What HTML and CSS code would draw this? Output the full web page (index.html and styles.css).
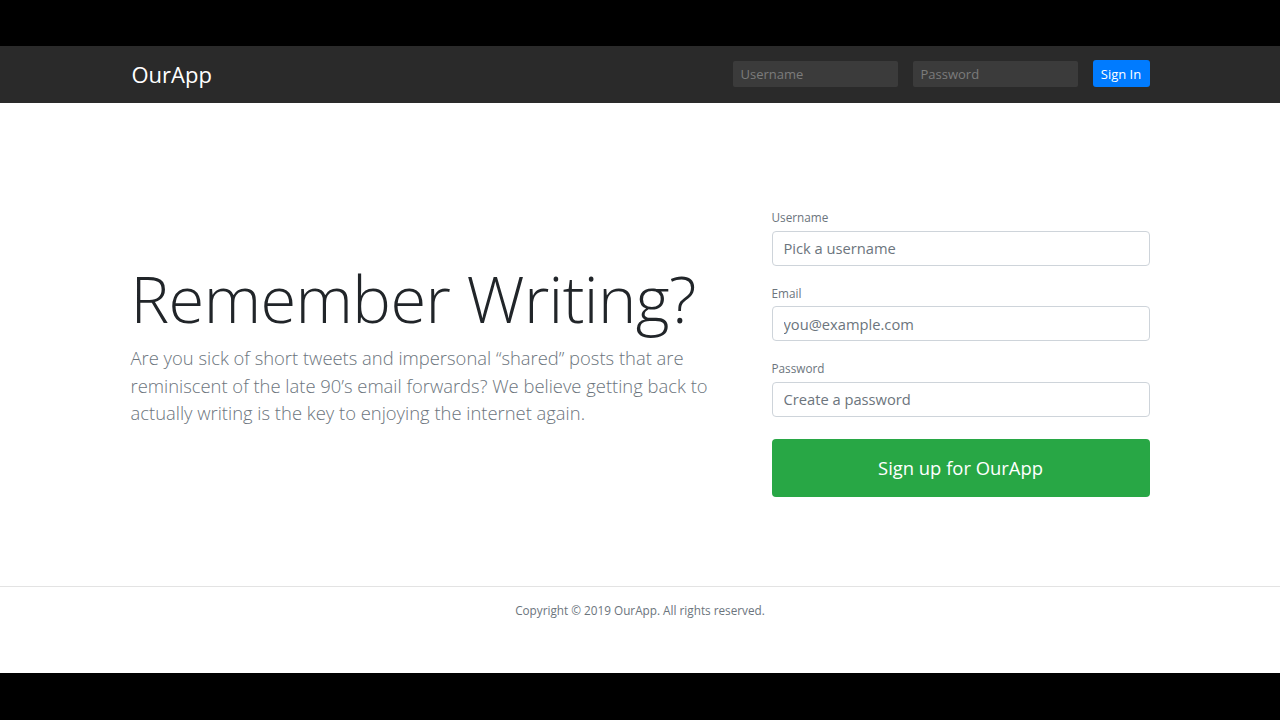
FILE: index.html
```html
<!DOCTYPE html>
<html>
<head>
    <link rel="stylesheet" href="styles.css">
</head>

<body>
<div class="screen">
  <header class="header-bar">
    <div class="container header-inner">
      <h4 class="brand">OurApp</h4>
      <form class="login-form">
        <input class="form-control-sm" type="text" placeholder="Username">
        <input class="form-control-sm" type="password" placeholder="Password">
        <button class="btn-sm" type="button">Sign In</button>
      </form>
    </div>
  </header>

  <div class="container main">
    <div class="row">
      <div class="col-intro">
        <h1 class="display-3">Remember Writing?</h1>
        <p class="lead">Are you sick of short tweets and impersonal &ldquo;shared&rdquo; posts that are reminiscent of the late 90&rsquo;s email forwards? We believe getting back to actually writing is the key to enjoying the internet again.</p>
      </div>
      <div class="col-form">
        <form>
          <div class="form-group">
            <label for="username-register">Username</label>
            <input id="username-register" class="form-control" type="text" placeholder="Pick a username">
          </div>
          <div class="form-group">
            <label for="email-register">Email</label>
            <input id="email-register" class="form-control" type="text" placeholder="you@example.com">
          </div>
          <div class="form-group">
            <label for="password-register">Password</label>
            <input id="password-register" class="form-control" type="password" placeholder="Create a password">
          </div>
          <button type="button" class="btn-signup">Sign up for OurApp</button>
        </form>
      </div>
    </div>
  </div>

  <footer class="footer">
    <p>Copyright &copy; 2019 OurApp. All rights reserved.</p>
  </footer>
</div>
</body>
</html>
```

FILE: styles.css
```css
body {
  margin: 0;
  background: #000;
  font-family: "Open Sans", "Liberation Sans", sans-serif;
  color: #212529;
}

.screen {
  margin-top: 46px;
  height: 627px;
  background: #fff;
  display: flex;
  flex-direction: column;
}

.container {
  width: 1019px;
  margin-left: auto;
  margin-right: auto;
}

/* header */
.header-bar {
  background: #2a2a2a;
  height: 57px;
}

.header-inner {
  height: 100%;
  display: flex;
  align-items: center;
  justify-content: space-between;
}

.brand {
  margin: 0 0 2px 1px;
  font-size: 22px;
  font-weight: 400;
  color: #fff;
}

.login-form {
  display: flex;
  align-items: center;
  gap: 15px;
  margin-bottom: 2px;
}

.form-control-sm {
  width: 165px;
  height: 26px;
  box-sizing: border-box;
  border: none;
  border-radius: 2px;
  background: #3b3b3b;
  padding: 0 8px;
  font-family: inherit;
  font-size: 13px;
  color: #ddd;
}

.form-control-sm::placeholder {
  color: #7c7c7c;
}

.btn-sm {
  height: 27px;
  width: 57px;
  border: none;
  border-radius: 3px;
  background: #007bff;
  color: #fff;
  font-family: inherit;
  font-size: 13px;
  padding: 0;
}

/* main */
.main {
  flex: 1;
  box-sizing: border-box;
  padding-top: 106px;
}

.row {
  display: flex;
  align-items: center;
}

.col-intro {
  width: 583px;
}

.col-form {
  width: 378px;
  margin-left: auto;
}

.display-3 {
  margin: 0 0 7px;
  font-size: 65px;
  font-weight: 300;
  line-height: 1.2;
  letter-spacing: -0.6px;
  white-space: nowrap;
  color: #212529;
}

.lead {
  margin: 0 0 20px;
  font-size: 18.4px;
  font-weight: 300;
  line-height: 1.5;
  color: #6c757d;
}

.form-group {
  margin-bottom: 19px;
}

label {
  display: block;
  margin-bottom: 4px;
  font-size: 11.75px;
  line-height: 1.5;
  color: #6c757d;
}

.form-control {
  display: block;
  width: 100%;
  height: 35px;
  box-sizing: border-box;
  border: 1px solid #ced4da;
  border-radius: 4px;
  padding: 0 11px;
  font-family: inherit;
  font-size: 14.7px;
  color: #495057;
}

.form-control::placeholder {
  color: #6c757d;
}

.btn-signup {
  display: block;
  width: 100%;
  height: 58px;
  margin-top: 22px;
  border: none;
  border-radius: 4px;
  background: #28a745;
  color: #fff;
  font-family: inherit;
  font-size: 18.4px;
}

/* footer */
.footer {
  height: 87px;
  box-sizing: border-box;
  border-top: 1px solid #e3e3e3;
  padding-top: 15px;
  text-align: center;
}

.footer p {
  margin: 0;
  font-size: 11.75px;
  line-height: 1.5;
  color: #6c757d;
}
```
